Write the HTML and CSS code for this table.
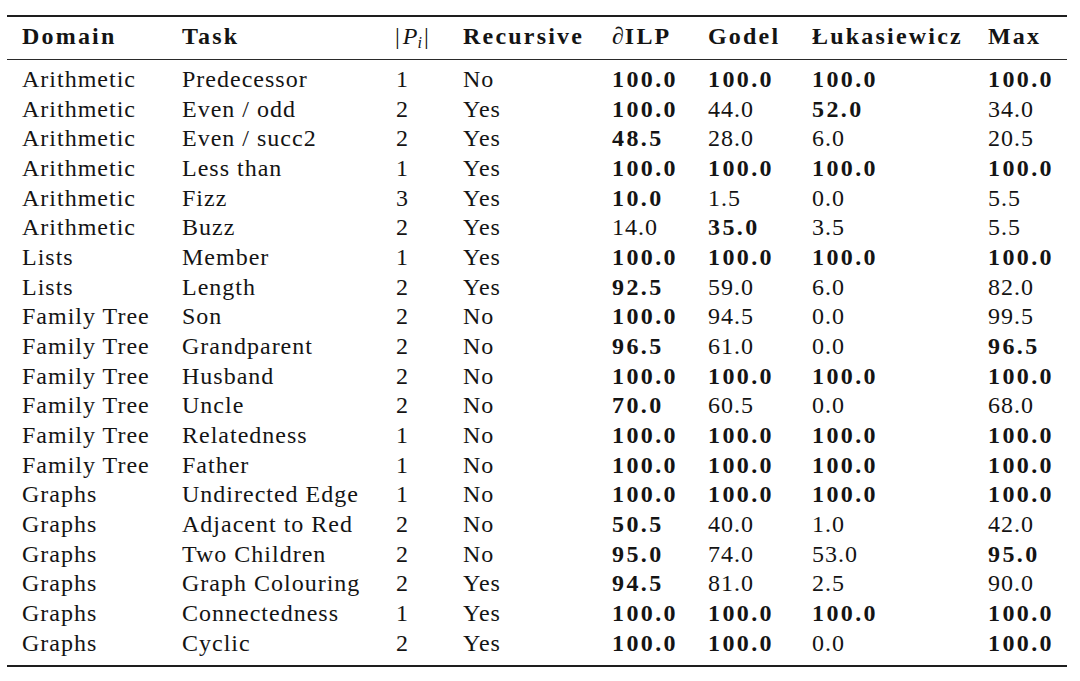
FILE: index.html
```html
<!DOCTYPE html>
<html lang="en">
<head>
<meta charset="utf-8">
<title>Results table</title>
<link rel="stylesheet" href="styles.css">
</head>
<body>
<div class="table">
  <div class="thead">
    <div class="row head">
      <span>Domain</span><span>Task</span>
      <span class="math">|<i>P</i><sub>i</sub>|</span>
      <span>Recursive</span>
      <span><span class="partial">∂</span>ILP</span>
      <span>Godel</span><span>Łukasiewicz</span><span>Max</span>
    </div>
  </div>
  <div class="tbody">
    <div class="row"><span>Arithmetic</span><span>Predecessor</span><span>1</span><span>No</span><b>100.0</b><b>100.0</b><b>100.0</b><b>100.0</b></div>
    <div class="row"><span>Arithmetic</span><span>Even / odd</span><span>2</span><span>Yes</span><b>100.0</b><span>44.0</span><b>52.0</b><span>34.0</span></div>
    <div class="row"><span>Arithmetic</span><span>Even / succ2</span><span>2</span><span>Yes</span><b>48.5</b><span>28.0</span><span>6.0</span><span>20.5</span></div>
    <div class="row"><span>Arithmetic</span><span>Less than</span><span>1</span><span>Yes</span><b>100.0</b><b>100.0</b><b>100.0</b><b>100.0</b></div>
    <div class="row"><span>Arithmetic</span><span>Fizz</span><span>3</span><span>Yes</span><b>10.0</b><span>1.5</span><span>0.0</span><span>5.5</span></div>
    <div class="row"><span>Arithmetic</span><span>Buzz</span><span>2</span><span>Yes</span><span>14.0</span><b>35.0</b><span>3.5</span><span>5.5</span></div>
    <div class="row"><span>Lists</span><span>Member</span><span>1</span><span>Yes</span><b>100.0</b><b>100.0</b><b>100.0</b><b>100.0</b></div>
    <div class="row"><span>Lists</span><span>Length</span><span>2</span><span>Yes</span><b>92.5</b><span>59.0</span><span>6.0</span><span>82.0</span></div>
    <div class="row"><span>Family Tree</span><span>Son</span><span>2</span><span>No</span><b>100.0</b><span>94.5</span><span>0.0</span><span>99.5</span></div>
    <div class="row"><span>Family Tree</span><span>Grandparent</span><span>2</span><span>No</span><b>96.5</b><span>61.0</span><span>0.0</span><b>96.5</b></div>
    <div class="row"><span>Family Tree</span><span>Husband</span><span>2</span><span>No</span><b>100.0</b><b>100.0</b><b>100.0</b><b>100.0</b></div>
    <div class="row"><span>Family Tree</span><span>Uncle</span><span>2</span><span>No</span><b>70.0</b><span>60.5</span><span>0.0</span><span>68.0</span></div>
    <div class="row"><span>Family Tree</span><span>Relatedness</span><span>1</span><span>No</span><b>100.0</b><b>100.0</b><b>100.0</b><b>100.0</b></div>
    <div class="row"><span>Family Tree</span><span>Father</span><span>1</span><span>No</span><b>100.0</b><b>100.0</b><b>100.0</b><b>100.0</b></div>
    <div class="row"><span>Graphs</span><span>Undirected Edge</span><span>1</span><span>No</span><b>100.0</b><b>100.0</b><b>100.0</b><b>100.0</b></div>
    <div class="row"><span>Graphs</span><span>Adjacent to Red</span><span>2</span><span>No</span><b>50.5</b><span>40.0</span><span>1.0</span><span>42.0</span></div>
    <div class="row"><span>Graphs</span><span>Two Children</span><span>2</span><span>No</span><b>95.0</b><span>74.0</span><span>53.0</span><b>95.0</b></div>
    <div class="row"><span>Graphs</span><span>Graph Colouring</span><span>2</span><span>Yes</span><b>94.5</b><span>81.0</span><span>2.5</span><span>90.0</span></div>
    <div class="row"><span>Graphs</span><span>Connectedness</span><span>1</span><span>Yes</span><b>100.0</b><b>100.0</b><b>100.0</b><b>100.0</b></div>
    <div class="row"><span>Graphs</span><span>Cyclic</span><span>2</span><span>Yes</span><b>100.0</b><b>100.0</b><span>0.0</span><b>100.0</b></div>
  </div>
</div>
</body>
</html>
```
FILE: styles.css
```css
html, body {
  margin: 0;
  padding: 0;
  background: #ffffff;
}

body {
  font-family: "Liberation Serif", "Times New Roman", serif;
  font-size: 24px;
  color: #141414;
}

.table {
  width: 1060px;
  margin: 15px 0 0 7px;
  border-top: 2px solid #1e1e1e;
  border-bottom: 2px solid #1e1e1e;
}

.thead {
  padding: 5px 0 7.5px 0;
  border-bottom: 1.3px solid #2a2a2a;
}

.tbody {
  padding: 4.8px 0 6.5px 0;
}

.row {
  display: grid;
  grid-template-columns: 160px 214px 67px 149px 96px 104px 176px 1fr;
  padding-left: 15px;
  height: 29.68px;
  line-height: 29.68px;
  white-space: nowrap;
  letter-spacing: 1px;
}

.row b {
  font-weight: 700;
  letter-spacing: 2.4px;
}

.head > span {
  font-weight: 700;
  letter-spacing: 2.2px;
}

.head > span.math {
  font-weight: 400;
  letter-spacing: 0;
  margin-left: -1px;
}

.math i {
  font-style: italic;
  padding: 0 2px 0 3px;
}

.math sub {
  font-size: 16px;
  font-style: italic;
  line-height: 0;
  vertical-align: -4px;
  margin-left: -2px;
  margin-right: 2px;
}

.partial {
  font-weight: 400;
  font-style: italic;
  letter-spacing: 1px;
}
```
